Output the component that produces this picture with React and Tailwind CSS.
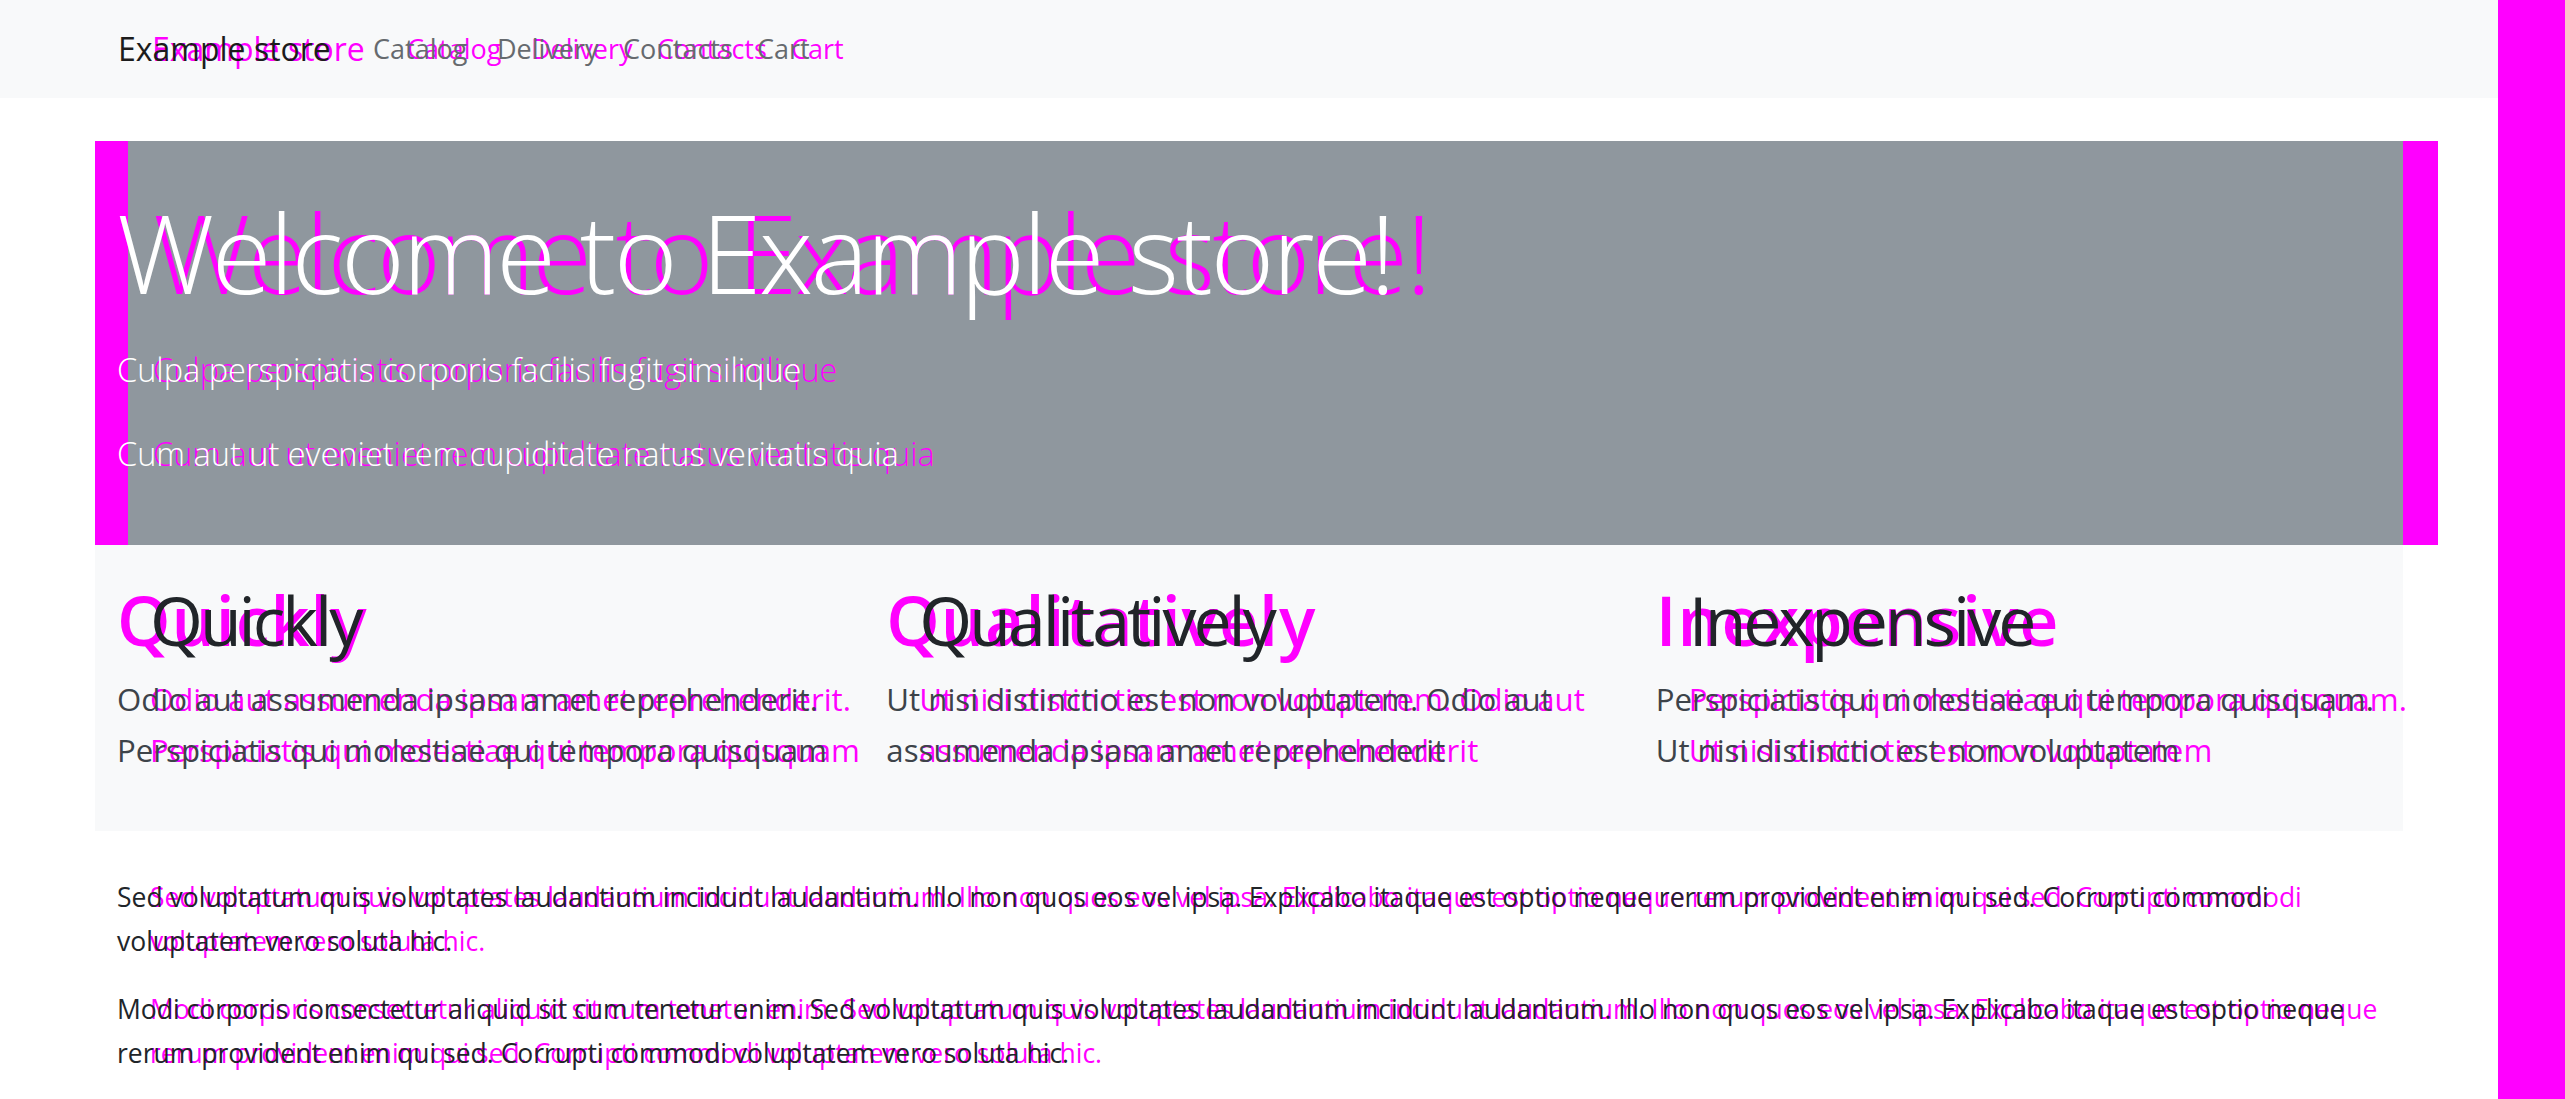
import React from "react";

// texte doublé : la copie magenta est posée sous le texte de base
const Line = ({ text, base, ghost }) => (
  <div className="relative whitespace-nowrap">
    <span aria-hidden="true" className={`absolute top-0 ${ghost}`}>{text}</span>
    <span className={`relative ${base}`}>{text}</span>
  </div>
);

const navItems = [
  { text: "Catalog", w: "w-[124px]" },
  { text: "Delivery", w: "w-[126px]" },
  { text: "Contacts", w: "w-[134px]" },
  { text: "Cart", w: "w-[80px]" },
];

const features = [
  {
    title: "Quickly",
    lines: ["Odio aut assumenda ipsam amet reprehenderit.", "Perspiciatis qui molestiae qui tempora quisquam"],
  },
  {
    title: "Qualitatively",
    lines: ["Ut nisi distinctio est non voluptatem. Odio aut", "assumenda ipsam amet reprehenderit"],
  },
  {
    title: "Inexpensive",
    lines: ["Perspiciatis qui molestiae qui tempora quisquam.", "Ut nisi distinctio est non voluptatem"],
  },
];

const paragraphs = [
  [
    "Sed voluptatum quis voluptates laudantium incidunt laudantium. Illo non quos eos vel ipsa. Explicabo itaque est optio neque rerum provident enim qui sed. Corrupti commodi",
    "voluptatem vero soluta hic.",
  ],
  [
    "Modi corporis consectetur aliquid sit cum tenetur enim. Sed voluptatum quis voluptates laudantium incidunt laudantium. Illo non quos eos vel ipsa. Explicabo itaque est optio neque",
    "rerum provident enim qui sed. Corrupti commodi voluptatem vero soluta hic.",
  ],
];

export default function App() {
  return (
    <div className="flex w-[2565px] min-h-[1099px] bg-white font-['Open_Sans',sans-serif]">
      <div className="w-[2498px]">
        {/* Navbar */}
        <nav className="h-[98px] bg-[#f8f9fa] flex items-center pl-[118px]">
          <div className="w-[255px]">
            <Line
              text="Example store"
              base="text-[32px] text-[#1c1c1c]"
              ghost="left-[34px] text-[32px] text-[#ff00ff]"
            />
          </div>
          {navItems.map((item) => (
            <div key={item.text} className={item.w}>
              <Line
                text={item.text}
                base="text-[27px] text-[#666a6e]"
                ghost="left-[34px] text-[27px] text-[#ff00ff]"
              />
            </div>
          ))}
        </nav>

        {/* Hero */}
        <section className="mt-[43px] ml-[95px] w-[2343px] h-[404px] bg-[#8f979e] shadow-[inset_33px_0_0_#ff00ff,inset_-35px_0_0_#ff00ff] pl-[22px] pt-[56px] text-white">
          <Line
            text="Welcome to Example store!"
            base="text-[109px] font-light leading-none tracking-[-2.4px] text-white"
            ghost="left-[36px] text-[109px] font-light leading-none tracking-[-2.4px] text-[#ff00ff]"
          />
          <div className="mt-[48px]">
            <Line
              text="Culpa perspiciatis corporis facilis fugit similique"
              base="text-[32.5px] font-light leading-none text-white"
              ghost="left-[36px] text-[32.5px] font-light leading-none text-[#ff00ff]"
            />
          </div>
          <div className="mt-[50px]">
            <Line
              text="Cum aut ut eveniet rem cupiditate natus veritatis quia"
              base="text-[32.5px] font-light leading-none text-white"
              ghost="left-[36px] text-[32.5px] font-light leading-none text-[#ff00ff]"
            />
          </div>
        </section>

        {/* Features */}
        <section className="ml-[95px] w-[2308px] h-[286px] bg-[#f8f9fa] grid grid-cols-3">
          {features.map((f) => (
            <div key={f.title} className="pl-[22px] pt-[41px]">
              <div className="relative whitespace-nowrap">
                <span className="text-[68px] font-semibold leading-none text-[#ff00ff] tracking-[1px]">{f.title}</span>
                <span className="absolute top-0 left-[33px] text-[68px] font-medium leading-none text-[#212529] tracking-[-3px]">
                  {f.title}
                </span>
              </div>
              <div className="mt-[20px]">
                {f.lines.map((l) => (
                  <Line
                    key={l}
                    text={l}
                    base="text-[31.2px] leading-[51px] text-[#3d4349]"
                    ghost="left-[33px] text-[31.2px] leading-[51px] text-[#ff00ff]"
                  />
                ))}
              </div>
            </div>
          ))}
        </section>

        {/* Texte */}
        <div className="pl-[117px] pt-[44px]">
          {paragraphs.map((p, i) => (
            <div key={i} className={i > 0 ? "mt-[24px]" : ""}>
              {p.map((l) => (
                <Line
                  key={l}
                  text={l}
                  base="text-[26.5px] leading-[44px] text-[#212529]"
                  ghost="left-[33px] text-[26.5px] leading-[44px] text-[#ff00ff]"
                />
              ))}
            </div>
          ))}
        </div>
      </div>
      <div className="w-[67px] bg-[#ff00ff]" />
    </div>
  );
}
